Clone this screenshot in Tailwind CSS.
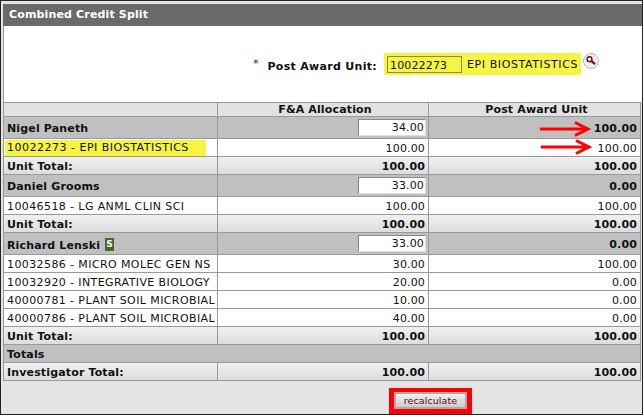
<!DOCTYPE html>
<html lang="en">
<head>
    <meta charset="UTF-8">
    <title>Combined Credit Split</title>
    <script src="https://cdn.jsdelivr.net/npm/@tailwindcss/browser@4"></script>
</head>
<body class="w-[643px] h-[415px] overflow-hidden bg-[#e4e4e4] font-['DejaVu_Sans',sans-serif] text-[11px] text-[#111]">
    <div class="h-[415px] border border-[#222] pt-[3px] pl-[2px] flex flex-col">

        <!-- section title -->
        <div class="h-[22px] shrink-0 bg-[#6a6a6a] text-white font-bold tracking-[0.15px] pl-[6px] flex items-center">Combined Credit Split</div>

        <!-- post award unit -->
        <div class="h-[76px] shrink-0 bg-white border-l border-[#999] flex items-start pt-[27px] pl-[249px]">
            <span class="text-[#2222aa] mr-[9px] leading-[22px]">*</span>
            <span class="font-bold tracking-[0.3px] mr-[7px] leading-[27px]">Post Award Unit:</span>
            <div class="bg-[#f5f542] h-[22px] flex items-center pl-[3px] pr-[3px]">
                <input value="10022273" class="w-[75px] h-[17px] mt-[1px] pt-[1px] bg-[#f5f542] border border-[#8a8a50] px-[2px] text-[11px] tracking-[0.15px] mr-[5px]">
                <span class="pt-[3px] tracking-[0.6px]">EPI BIOSTATISTICS</span>
            </div>
            <svg class="ml-[2px]" width="16" height="16" viewBox="0 0 16 16">
                <circle cx="8" cy="8" r="7.5" fill="#eeeeee" stroke="#b5b5b5"/>
                <circle cx="6.5" cy="6.2" r="2.4" fill="#fff" stroke="#701020" stroke-width="1.5"/>
                <path d="M8.5 8.2l3.5 3" stroke="#701020" stroke-width="2.2"/>
            </svg>
        </div>

        <!-- table -->
        <table class="table-fixed border-collapse w-[637px] shrink-0 leading-[14px] tracking-[0.15px]">
            <colgroup><col class="w-[214px]"><col class="w-[211px]"><col class="w-[212px]"></colgroup>
            <thead>
                <tr class="h-[14px] bg-[#e2e2e2] font-bold text-center">
                    <th class="border border-[#999] p-0 leading-[12px]"></th>
                    <th class="border border-[#999] p-0 pl-[4px] pt-[1px] leading-[12px]">F&amp;A Allocation</th>
                    <th class="border border-[#999] p-0 pl-[4px] pt-[1px] leading-[12px]">Post Award Unit</th>
                </tr>
            </thead>
            <tbody>
                <tr class="h-[22px] bg-[#c0c0c0] font-bold [&>td]:pt-[3px]">
                    <td class="border border-[#999] px-[3px] py-0">Nigel Paneth</td>
                    <td class="border border-[#999] px-[2px] py-0 pt-0! text-right"><input value="34.00" class="w-[68px] h-[17px] bg-white border border-[#888] border-r-[#ddd] border-b-[#ddd] px-[1px] text-right font-normal text-[11px] tracking-[0.15px] align-middle"></td>
                    <td class="border border-[#999] px-[3px] py-0 text-right relative">100.00
                        <svg class="absolute left-[111px] top-[4px]" width="52" height="16" viewBox="0 0 52 16"><path d="M0 8h46M35 1.5l13 6.5-13 6.5" fill="none" stroke="#f00" stroke-width="3"/></svg>
                    </td>
                </tr>
                <tr class="h-[18px] bg-white [&>td]:pt-[2px]">
                    <td class="border border-[#999] p-0 pt-0! pl-[1px]"><div class="bg-[#f5f542] w-[201px] h-[16px] pl-[2px] leading-[16px] tracking-[0.5px]">10022273 - EPI BIOSTATISTICS</div></td>
                    <td class="border border-[#999] px-[3px] py-0 text-right">100.00</td>
                    <td class="border border-[#999] px-[3px] py-0 text-right relative">100.00
                        <svg class="absolute left-[112px] top-[0px]" width="52" height="16" viewBox="0 0 52 16"><path d="M0 8h46M35 1.5l13 6.5-13 6.5" fill="none" stroke="#f00" stroke-width="3"/></svg>
                    </td>
                </tr>
                <tr class="h-[18px] bg-gradient-to-b from-[#f0f0f0] to-[#dcdcdc] font-bold [&>td]:pt-[2px]">
                    <td class="border border-[#999] px-[3px] py-0">Unit Total:</td>
                    <td class="border border-[#999] px-[3px] py-0 text-right">100.00</td>
                    <td class="border border-[#999] px-[3px] py-0 text-right">100.00</td>
                </tr>

                <tr class="h-[22px] bg-[#c0c0c0] font-bold [&>td]:pt-[3px]">
                    <td class="border border-[#999] px-[3px] py-0">Daniel Grooms</td>
                    <td class="border border-[#999] px-[2px] py-0 pt-0! text-right"><input value="33.00" class="w-[68px] h-[17px] bg-white border border-[#888] border-r-[#ddd] border-b-[#ddd] px-[1px] text-right font-normal text-[11px] tracking-[0.15px] align-middle"></td>
                    <td class="border border-[#999] px-[3px] py-0 text-right">0.00</td>
                </tr>
                <tr class="h-[18px] bg-white [&>td]:pt-[2px]">
                    <td class="border border-[#999] px-[3px] py-0 tracking-[0.4px]">10046518 - LG ANML CLIN SCI</td>
                    <td class="border border-[#999] px-[3px] py-0 text-right">100.00</td>
                    <td class="border border-[#999] px-[3px] py-0 text-right">100.00</td>
                </tr>
                <tr class="h-[18px] bg-gradient-to-b from-[#f0f0f0] to-[#dcdcdc] font-bold [&>td]:pt-[2px]">
                    <td class="border border-[#999] px-[3px] py-0">Unit Total:</td>
                    <td class="border border-[#999] px-[3px] py-0 text-right">100.00</td>
                    <td class="border border-[#999] px-[3px] py-0 text-right">100.00</td>
                </tr>

                <tr class="h-[22px] bg-[#c0c0c0] font-bold [&>td]:pt-[3px]">
                    <td class="border border-[#999] px-[3px] py-0">Richard Lenski <span class="inline-block w-[9px] h-[13px] bg-[#3f6b2a] text-white text-[9px] leading-[12px] text-center align-[2px] ml-[1px]">S</span></td>
                    <td class="border border-[#999] px-[2px] py-0 pt-0! text-right"><input value="33.00" class="w-[68px] h-[17px] bg-white border border-[#888] border-r-[#ddd] border-b-[#ddd] px-[1px] text-right font-normal text-[11px] tracking-[0.15px] align-middle"></td>
                    <td class="border border-[#999] px-[3px] py-0 text-right">0.00</td>
                </tr>
                <tr class="h-[18px] bg-white [&>td]:pt-[2px]">
                    <td class="border border-[#999] px-[3px] py-0 tracking-[0.4px]">10032586 - MICRO MOLEC GEN NS</td>
                    <td class="border border-[#999] px-[3px] py-0 text-right">30.00</td>
                    <td class="border border-[#999] px-[3px] py-0 text-right">100.00</td>
                </tr>
                <tr class="h-[18px] bg-white [&>td]:pt-[2px]">
                    <td class="border border-[#999] px-[3px] py-0 tracking-[0.4px]">10032920 - INTEGRATIVE BIOLOGY</td>
                    <td class="border border-[#999] px-[3px] py-0 text-right">20.00</td>
                    <td class="border border-[#999] px-[3px] py-0 text-right">0.00</td>
                </tr>
                <tr class="h-[18px] bg-white [&>td]:pt-[2px]">
                    <td class="border border-[#999] px-[3px] py-0 tracking-[0.4px] whitespace-nowrap">40000781 - PLANT SOIL MICROBIAL</td>
                    <td class="border border-[#999] px-[3px] py-0 text-right">10.00</td>
                    <td class="border border-[#999] px-[3px] py-0 text-right">0.00</td>
                </tr>
                <tr class="h-[18px] bg-white [&>td]:pt-[2px]">
                    <td class="border border-[#999] px-[3px] py-0 tracking-[0.4px] whitespace-nowrap">40000786 - PLANT SOIL MICROBIAL</td>
                    <td class="border border-[#999] px-[3px] py-0 text-right">40.00</td>
                    <td class="border border-[#999] px-[3px] py-0 text-right">0.00</td>
                </tr>
                <tr class="h-[18px] bg-gradient-to-b from-[#f0f0f0] to-[#dcdcdc] font-bold [&>td]:pt-[2px]">
                    <td class="border border-[#999] px-[3px] py-0">Unit Total:</td>
                    <td class="border border-[#999] px-[3px] py-0 text-right">100.00</td>
                    <td class="border border-[#999] px-[3px] py-0 text-right">100.00</td>
                </tr>

                <tr class="h-[18px] bg-[#c0c0c0] font-bold [&>td]:pt-[2px]">
                    <td colspan="3" class="border border-[#999] px-[3px] py-0">Totals</td>
                </tr>
                <tr class="h-[18px] bg-gradient-to-b from-[#f0f0f0] to-[#dcdcdc] font-bold [&>td]:pt-[2px]">
                    <td class="border border-[#999] px-[3px] py-0">Investigator Total:</td>
                    <td class="border border-[#999] px-[3px] py-0 text-right">100.00</td>
                    <td class="border border-[#999] px-[3px] py-0 text-right">100.00</td>
                </tr>
            </tbody>
        </table>

        <!-- recalculate -->
        <div class="flex-1 flex items-end pl-[386px]">
            <div class="border-[5px] border-t-[4px] border-[#f00]">
                <button class="block w-[73px] h-[17px] bg-gradient-to-b from-[#f0f0f0] to-[#cccccc] border-2 border-[#aaa] text-[9.5px] text-[#5a1010] leading-[12px] tracking-[0.1px] font-['DejaVu_Sans',sans-serif]">recalculate</button>
            </div>
        </div>
    </div>
</body>
</html>
